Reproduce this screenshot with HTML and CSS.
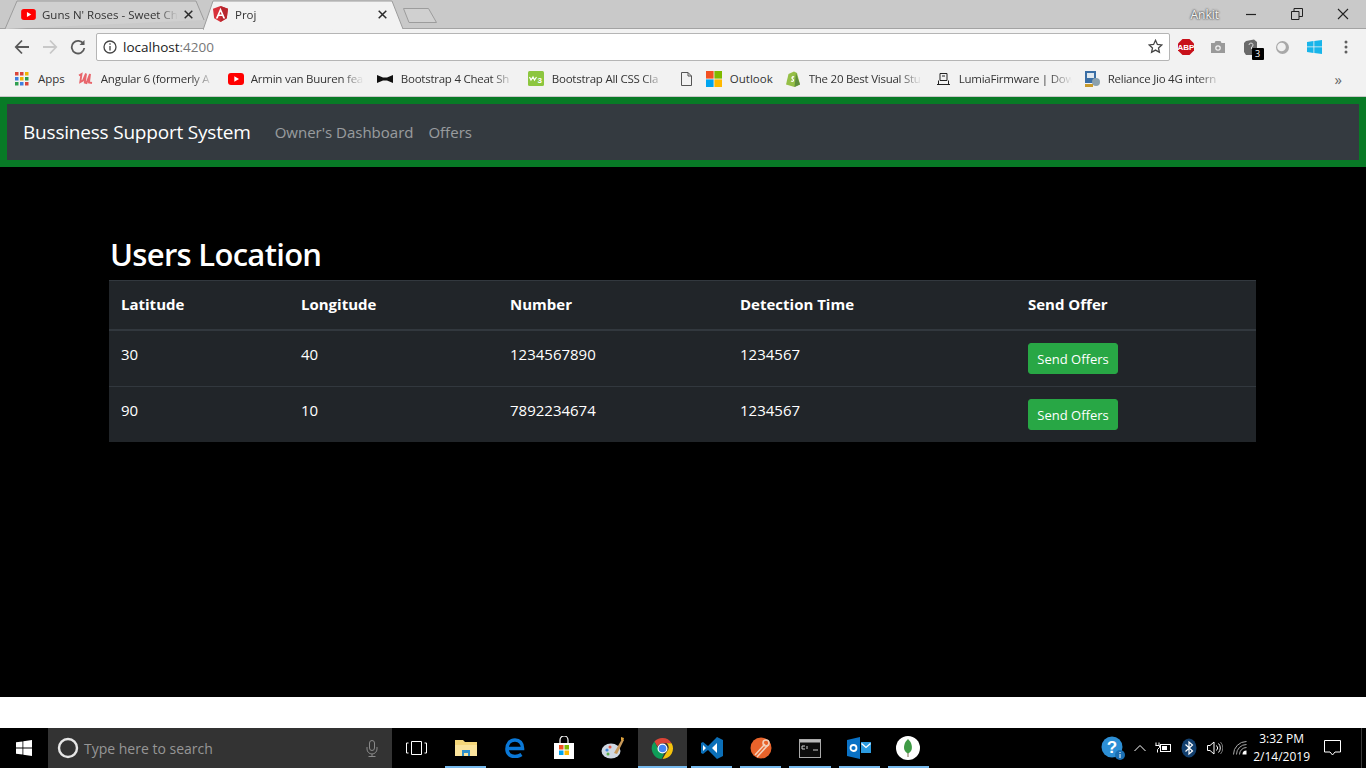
FILE: index.html
```html
<!DOCTYPE html>
<html lang="en">
<head>
    <meta charset="UTF-8">
    <meta name="viewport" content="width=device-width, initial-scale=1.0">
    <title>Proj</title>
    <link rel="stylesheet" href="styles.css">
</head>
<body>
    <svg class="defs" width="0" height="0">
        <symbol id="yt" viewBox="0 0 16 12"><rect width="16" height="12" rx="3" fill="#f00"/><path d="M6.3 3.3v5.4L11 6z" fill="#fff"/></symbol>
        <symbol id="tabx" viewBox="0 0 9 9"><path d="M.7.7l7.600 7.600M8.300.7L.7 8.300" fill="none" stroke="#2b2b2b" stroke-width="1.500"/></symbol>
    </svg>

    <!-- browser: tabs -->
    <div class="tabbar">
        <div class="tab">
            <svg class="tab-shape" width="205" height="29" viewBox="0 0 205 29"><path d="M5 29 L17 1 H196 L204 20" fill="#d0d0d0" stroke="#9c9c9c"/></svg>
            <svg class="fav" width="15" height="11"><use href="#yt"/></svg>
            <span class="tab-title">Guns N' Roses - Sweet Ch</span>
            <svg class="tab-x" width="9" height="9"><use href="#tabx"/></svg>
        </div>
        <div class="tab tab-active">
            <svg class="tab-shape" width="202" height="30" viewBox="0 0 202 30"><path d="M0 30 L10 1 H189 L200 29" fill="#f2f2f2" stroke="#9c9c9c"/></svg>
            <svg class="fav" width="15" height="16" viewBox="0 0 15 16"><path d="M7.500 0L0 2.700l1.200 9.600L7.500 16l6.300-3.700L15 2.700z" fill="#d8303a"/><path d="M7.500 0v16l6.300-3.700L15 2.700z" fill="#b8262e"/><path d="M7.500 1.800L2.800 12.500h1.900l1-2.400h3.600l1 2.400h1.900zm0 4l1.200 2.800H6.300z" fill="#fff"/></svg>
            <span class="tab-title">Proj</span>
            <svg class="tab-x" width="9" height="9"><use href="#tabx"/></svg>
        </div>
        <svg class="new-tab" width="36" height="17" viewBox="0 0 36 17"><path d="M1.500 1.500H26.500L34.500 15.500H7z" fill="#d0d0d0" stroke="#9c9c9c" stroke-linejoin="round"/></svg>
        <span class="user">Ankit</span>
        <div class="winbtns">
            <svg width="12" height="12" viewBox="0 0 12 12"><path d="M1 6.500h10" stroke="#222" stroke-width="1.200"/></svg>
            <svg width="12" height="12" viewBox="0 0 12 12" fill="none" stroke="#222"><path d="M.5 3.500h7.500v8H.5zM3 3.500V.5h8.500v8H8"/></svg>
            <svg width="12" height="12" viewBox="0 0 12 12" stroke="#222" stroke-width="1.100"><path d="M1 1l10 10M11 1L1 11"/></svg>
        </div>
    </div>

    <!-- browser: address bar -->
    <div class="toolbar">
        <svg class="nav-ic" width="16" height="16" viewBox="0 0 16 16" fill="none" stroke="#5a5a5a" stroke-width="1.800"><path d="M15 8H2M8 1.500L1.800 8 8 14.500"/></svg>
        <svg class="nav-ic" width="16" height="16" viewBox="0 0 16 16" fill="none" stroke="#c8c8c8" stroke-width="1.800"><path d="M1 8h13M8 1.500L14.200 8 8 14.500"/></svg>
        <svg class="nav-ic" width="16" height="16" viewBox="0 0 16 16" fill="none" stroke="#5a5a5a" stroke-width="1.800"><path d="M13.500 5A6.300 6.300 0 1 0 14.300 9"/><path d="M14.500 1v5h-5z" fill="#5a5a5a" stroke="none"/></svg>
        <div class="omnibox">
            <svg width="14" height="14" viewBox="0 0 14 14" fill="none" stroke="#444" stroke-width="1.300"><circle cx="7" cy="7" r="6"/><path d="M7 6v4.500M7 3.300v1.500"/></svg>
            <span class="url">localhost<span class="url-port">:4200</span></span>
            <svg class="star" width="15" height="15" viewBox="0 0 15 15" fill="none" stroke="#444" stroke-width="1.300"><path d="M7.500 1.300l1.900 4.100 4.400.5-3.300 3 .9 4.400-3.900-2.200-3.900 2.200.9-4.400-3.300-3 4.400-.5z"/></svg>
        </div>
        <div class="ext-icons">
            <svg width="18" height="18" viewBox="0 0 18 18"><path d="M5.500 1h7L17 5.500v7L12.500 17h-7L1 12.500v-7z" fill="#c8101a"/><text x="9" y="12" class="abp">ABP</text></svg>
            <svg width="16" height="14" viewBox="0 0 16 14"><path d="M1 3h3.500l1-2h5l1 2H15v10H1z" fill="#9a9a9a"/><circle cx="8" cy="8" r="2.800" fill="#f2f2f2"/><circle cx="8" cy="8" r="1.600" fill="#9a9a9a"/></svg>
            <div class="ext-badge-wrap">
                <svg width="15" height="16" viewBox="0 0 15 16"><path d="M3 2l8-1.500L14 3v10l-5 3H3L1 13V4z" fill="#6a6a6a"/><path d="M6 6a2 2 0 1 1 2.500 2V10" fill="none" stroke="#ddd"/></svg>
                <span class="ext-badge">3</span>
            </div>
            <svg width="15" height="15" viewBox="0 0 15 15"><circle cx="7.500" cy="7.500" r="6.500" fill="#a8a8a8"/><circle cx="6.500" cy="7" r="4.300" fill="#f1f1f1"/></svg>
            <svg width="15" height="14" viewBox="0 0 15 14" fill="#18b5ea"><path d="M0 2l6.500-1v5.500H0zM7.300.9L15 0v6.500H7.300zM0 7.300h6.500V13L0 12zM7.300 7.300H15V14l-7.700-1z"/></svg>
            <svg width="4" height="14" viewBox="0 0 4 14" fill="#5f5f5f"><circle cx="2" cy="2" r="1.500"/><circle cx="2" cy="7" r="1.500"/><circle cx="2" cy="12" r="1.500"/></svg>
        </div>
    </div>

    <!-- browser: bookmarks -->
    <div class="bookmarks">
        <a class="bm bm-apps">
            <svg width="14" height="14" viewBox="0 0 14 14"><g fill="#d9453a"><rect width="3.500" height="3.500"/><rect x="5" width="3.500" height="3.500"/></g><rect x="10" width="3.500" height="3.500" fill="#f0b400"/><g fill="#3f7fe0"><rect y="5" width="3.500" height="3.500"/></g><rect x="5" y="5" width="3.500" height="3.500" fill="#f0b400"/><rect x="10" y="5" width="3.500" height="3.500" fill="#2e9e4f"/><rect y="10" width="3.500" height="3.500" fill="#2e9e4f"/><rect x="5" y="10" width="3.500" height="3.500" fill="#3f7fe0"/><rect x="10" y="10" width="3.500" height="3.500" fill="#d9453a"/></svg>
            <span>Apps</span>
        </a>
        <a class="bm bm-wide">
            <svg width="15" height="13" viewBox="0 0 15 13" fill="none" stroke="#e8656b" stroke-width="1.900"><path d="M1 3.500l2.500-1.500-1.200 8 2.700-1.500L8 1.500 6.800 10.500l1.700.5 3.500-9-1 8.500 3 .5"/></svg>
            <span class="fade">Angular 6 (formerly A</span>
        </a>
        <a class="bm bm-yt">
            <svg width="16" height="12"><use href="#yt"/></svg>
            <span class="fade">Armin van Buuren fea</span>
        </a>
        <a class="bm bm-wide">
            <svg width="16" height="8" viewBox="0 0 16 8" fill="#111"><path d="M0 0l6 2.500h4L16 0v8l-6-2.500H6L0 8z"/></svg>
            <span class="fade">Bootstrap 4 Cheat Sh</span>
        </a>
        <a class="bm bm-w3">
            <svg width="16" height="15" viewBox="0 0 16 15"><rect width="16" height="15" rx="1.500" fill="#8cc63f"/><path d="M1.500 6l1.500 3 2-3 1.500 3 2-3" fill="none" stroke="#fff" stroke-width="1.200"/><text x="9.500" y="11.500" class="w3">3</text></svg>
            <span class="fade">Bootstrap All CSS Cla</span>
        </a>
        <a class="bm bm-doc">
            <svg width="11" height="14" viewBox="0 0 11 14" fill="none" stroke="#555"><path d="M.5.500h6.500l3.500 3.500v9.500H.5zM7 .5V4h3.500"/></svg>
        </a>
        <a class="bm bm-outlook">
            <svg width="16" height="16" viewBox="0 0 16 16"><rect width="7.600" height="7.600" fill="#f25022"/><rect x="8.400" width="7.600" height="7.600" fill="#7fba00"/><rect y="8.400" width="7.600" height="7.600" fill="#00a4ef"/><rect x="8.400" y="8.400" width="7.600" height="7.600" fill="#ffb900"/></svg>
            <span>Outlook</span>
        </a>
        <a class="bm bm-wide">
            <svg width="16" height="17" viewBox="0 0 16 17"><path d="M1 14.500L3.500 4 9 1.500 12 3l3 11.500L9.500 17z" fill="#95bf47"/><path d="M11 3l4 11.500L9.500 17z" fill="#5e8e3e"/><path d="M9.200 7c-2-.8-3 1-1.500 2 1.500 1 1 3-1.800 2" fill="none" stroke="#fff" stroke-width="1.300"/></svg>
            <span class="fade">The 20 Best Visual Stu</span>
        </a>
        <a class="bm bm-short">
            <svg width="15" height="14" viewBox="0 0 15 14" fill="none" stroke="#222"><path d="M4 1.500h7v7H4zM2.500 8.500v4h10v-4M1 12.500h13M6 4h3"/></svg>
            <span class="fade">LumiaFirmware | Dow</span>
        </a>
        <a class="bm">
            <svg width="17" height="16" viewBox="0 0 17 16"><rect x="1" width="11" height="12" fill="#3a6ea5"/><rect x="3" y="2" width="7" height="5" fill="#dfe8ef"/><circle cx="12" cy="11" r="4" fill="#8aa0ad"/><path d="M1 13h8v3H1z" fill="#c79a2c"/></svg>
            <span class="fade">Reliance Jio 4G intern</span>
        </a>
        <span class="bm-more">»</span>
    </div>

    <!-- the page -->
    <main class="page">
        <nav class="navbar">
            <a class="brand">Bussiness Support System</a>
            <a class="nav-link">Owner's Dashboard</a>
            <a class="nav-link">Offers</a>
        </nav>

        <div class="content">
            <h2>Users Location</h2>
            <table class="users">
                <thead>
                    <tr>
                        <th class="col-lat">Latitude</th>
                        <th class="col-lng">Longitude</th>
                        <th class="col-num">Number</th>
                        <th class="col-time">Detection Time</th>
                        <th>Send Offer</th>
                    </tr>
                </thead>
                <tbody>
                    <tr>
                        <td>30</td>
                        <td>40</td>
                        <td>1234567890</td>
                        <td>1234567</td>
                        <td class="cell-btn"><button class="btn-send">Send Offers</button></td>
                    </tr>
                    <tr>
                        <td>90</td>
                        <td>10</td>
                        <td>7892234674</td>
                        <td>1234567</td>
                        <td class="cell-btn"><button class="btn-send">Send Offers</button></td>
                    </tr>
                </tbody>
            </table>
        </div>
    </main>
    <div class="page-rest"></div>

    <!-- windows taskbar -->
    <footer class="taskbar">
        <div class="start">
            <svg width="16" height="16" viewBox="0 0 16 16" fill="#fff"><path d="M0 2.300l6.500-.9v6.200H0zM7.300 1.300L16 0v7.600H7.300zM0 8.400h6.500v6.200L0 13.700zM7.300 8.400H16V16l-8.700-1.300z"/></svg>
        </div>
        <div class="search">
            <svg width="22" height="22" viewBox="0 0 22 22" fill="none" stroke="#e6e6e6" stroke-width="2.400"><circle cx="11" cy="11" r="9"/></svg>
            <span class="search-text">Type here to search</span>
            <svg class="mic" width="12" height="17" viewBox="0 0 12 17" fill="none" stroke="#8a8a8a"><rect x="3.500" y=".5" width="5" height="10" rx="2.500"/><path d="M1 7v2a5 5 0 0 0 10 0V7M6 14v2.500M2.500 16.500h7"/></svg>
        </div>
        <div class="task-view">
            <svg width="21" height="14" viewBox="0 0 21 14" fill="none" stroke="#fff"><path d="M5.500.5h10v13h-10zM2.500 2H.5v10h2M18.500 2h2v10h-2"/></svg>
        </div>
        <div class="task on">
            <svg width="22" height="18" viewBox="0 0 22 18"><path d="M0 1h8l2 2h12v14H0z" fill="#f5d77a"/><path d="M0 6h22v11H0z" fill="#fbe49c"/><path d="M7 11h8v6H13v-3H9v3H7z" fill="#2f8fc9"/></svg>
        </div>
        <div class="task">
            <svg width="20" height="20" viewBox="0 0 20 20" fill="none" stroke="#0a78d7" stroke-width="3.600"><path d="M2.500 10.500h15C17.500 5 14.500 2 10 2 5 2 2 6 2 11c0 5 3.500 7.500 8 7.500 2.500 0 4.500-.7 6.500-2"/></svg>
        </div>
        <div class="task">
            <svg width="24" height="24" viewBox="0 0 24 24"><path d="M2 7h20v16H2z" fill="#fff"/><path d="M8 7V4a4 4 0 0 1 8 0v3" fill="none" stroke="#fff" stroke-width="1.200"/><rect x="7" y="9" width="4.500" height="4.500" fill="#f25022"/><rect x="12.500" y="9" width="4.500" height="4.500" fill="#7fba00"/><rect x="7" y="14.500" width="4.500" height="4.500" fill="#00a4ef"/><rect x="12.500" y="14.500" width="4.500" height="4.500" fill="#ffb900"/></svg>
        </div>
        <div class="task">
            <svg width="24" height="24" viewBox="0 0 24 24"><ellipse cx="10" cy="15" rx="9.500" ry="7.500" fill="#cfd8e3"/><circle cx="6" cy="14" r="1.600" fill="#3f86d8"/><circle cx="9" cy="11" r="1.500" fill="#e25a4a"/><circle cx="7" cy="18" r="1.500" fill="#5aae4e"/><path d="M13 17L21 3l2 1-7 14z" fill="#c8995a"/><path d="M20 1l3 1-1 3-2-1z" fill="#e0a33c"/></svg>
        </div>
        <div class="task on active">
            <svg width="23" height="23" viewBox="0 0 24 24"><path d="M12 1a11 11 0 0 1 9.500 5.500H12a5.500 5.500 0 0 0-5.200 3.800L3.500 4.800A11 11 0 0 1 12 1z" fill="#db4437"/><path d="M21.500 6.500A11 11 0 0 1 12 23l5-8.500a5.500 5.500 0 0 0-.6-8z" fill="#f4c20d"/><path d="M3.500 4.800L8 13a5.500 5.500 0 0 0 5.800 4.200L11 23A11 11 0 0 1 3.500 4.800z" fill="#0f9d58"/><circle cx="12" cy="12" r="4.600" fill="#4285f4" stroke="#fff" stroke-width="1.300"/></svg>
        </div>
        <div class="task on">
            <svg width="24" height="24" viewBox="0 0 24 24"><path d="M17 1l6 3v16l-6 3-9-9-5 4-2-1V7l2-1 5 4z" fill="#0b6fb8"/><path d="M17 7l-5 5 5 5zM3 9v6l3-3z" fill="#fff"/></svg>
        </div>
        <div class="task on">
            <svg width="24" height="24" viewBox="0 0 24 24"><circle cx="12" cy="12" r="10.500" fill="#e8632b"/><path d="M6 19L16 8M8 21l11-12" stroke="#f3d0bb" stroke-width="1.600"/><circle cx="17" cy="7" r="3" fill="none" stroke="#f3d0bb" stroke-width="1.600"/></svg>
        </div>
        <div class="task on">
            <svg width="22" height="19" viewBox="0 0 22 19"><rect x=".5" y=".5" width="21" height="18" fill="#0c0c0c" stroke="#aaa"/><rect x="1" y="1" width="20" height="2.500" fill="#bbb"/><path d="M3 7h3M3 7v3h3M8 7v3M14 11h5" stroke="#ccc" fill="none"/></svg>
        </div>
        <div class="task on">
            <svg width="24" height="22" viewBox="0 0 24 22"><path d="M0 3l13-3v22L0 19z" fill="#0a72c6"/><circle cx="6.500" cy="11" r="3" fill="none" stroke="#fff" stroke-width="1.800"/><rect x="14" y="5" width="10" height="11" fill="#2c9be0"/><path d="M14.500 6.500l4.500 4 4.500-4" fill="none" stroke="#fff" stroke-width="1.300"/></svg>
        </div>
        <div class="task on">
            <svg width="24" height="24" viewBox="0 0 24 24"><circle cx="12" cy="12" r="12" fill="#fff"/><path d="M12 3c4 3.500 4.500 8.500 3.500 11-.7 1.800-2.300 3-3.500 3.500C10.800 17 9.200 15.800 8.500 14 7.500 11.500 8 6.500 12 3z" fill="#3f9b45"/><path d="M12 17v4" stroke="#7a6a50"/></svg>
        </div>

        <div class="tray">
            <div class="tray-help">
                <svg width="24" height="24" viewBox="0 0 24 24"><circle cx="11" cy="11" r="10.500" fill="#2d8fd5"/><text x="11" y="17" class="help-q">?</text><circle cx="19" cy="19" r="5" fill="#1b6fb3"/><path d="M19 18v4M19 16v1" stroke="#fff"/></svg>
            </div>
            <svg class="tray-chev" width="12" height="8" viewBox="0 0 12 8" fill="none" stroke="#fff"><path d="M.5 7L6 1.500 11.500 7"/></svg>
            <svg width="16" height="12" viewBox="0 0 16 12" fill="none" stroke="#fff"><rect x="5.500" y="2.500" width="10" height="7"/><rect x="7" y="4" width="5" height="4" fill="#fff" stroke="none"/><path d="M1 .5v3M4 .5v3M.5 3.500h4v2l-2 2v3"/></svg>
            <svg class="tray-bt" width="16" height="20" viewBox="0 0 16 20"><ellipse cx="8" cy="10" rx="7.500" ry="9.500" fill="#123f6e"/><path d="M4.500 6.500l7 6.500L8 16V4l3.500 3-7 6.500" fill="none" stroke="#fff" stroke-width="1.200"/></svg>
            <svg width="16" height="14" viewBox="0 0 16 14" fill="none" stroke="#fff"><path d="M.5 4.500h2.500L7 1v12L3 9.500H.5zM9.500 4.500a3.500 3.500 0 0 1 0 5M11.500 2.500a6.500 6.500 0 0 1 0 9"/><path d="M13.500 1a9 9 0 0 1 0 12" stroke="#777"/></svg>
            <svg width="14" height="14" viewBox="0 0 14 14" fill="none" stroke="#aaa"><path d="M.5 13.500A13 13 0 0 1 13.500.5M3.500 13.500A10 10 0 0 1 13.500 3.500M6.500 13.500A7 7 0 0 1 13.500 6.500" /><path d="M9.500 13.500a4 4 0 0 1 4-4v4z" fill="#fff" stroke="none"/></svg>
            <div class="clock"><span>3:32 PM</span><span>2/14/2019</span></div>
            <svg class="notif" width="17" height="16" viewBox="0 0 17 16" fill="none" stroke="#fff"><path d="M.5.500h16v11.500H11l-2.500 3-2.500-3H.5z"/></svg>
        </div>
    </footer>
</body>
</html>
```

FILE: styles.css
```css
* {
    box-sizing: border-box;
}
body {
    margin: 0;
    height: 768px;
    overflow: hidden;
    display: flex;
    flex-direction: column;
    font-family: "Open Sans", "Noto Sans", sans-serif;
    background: #fff;
}
.defs {
    display: block;
    height: 0;
}
svg {
    flex: none;
    display: block;
}

/* tabs */
.tabbar {
    height: 29px;
    flex: none;
    display: flex;
    align-items: center;
    background: #c9c9c9;
    border-bottom: 1px solid #a3a3a3;
    padding-left: 5px;
}
.tab {
    position: relative;
    width: 198px;
    height: 29px;
    display: flex;
    align-items: center;
    padding: 0 10px 0 16px;
    font-size: 11.5px;
    color: #333;
}
.tab-active {
    width: 199px;
    padding-right: 15px;
}
.tab-shape {
    position: absolute;
    top: 0;
    left: -5px;
}
.tab-active .tab-shape {
    left: 0;
}
.tab .fav {
    position: relative;
    margin-right: 6px;
}
.tab-active .fav {
    margin-left: -6px;
    margin-right: 7px;
}
.tab-title {
    position: relative;
    flex: 1;
    white-space: nowrap;
    overflow: hidden;
    -webkit-mask-image: linear-gradient(to right, #000 85%, transparent);
    mask-image: linear-gradient(to right, #000 85%, transparent);
}
.tab-x {
    position: relative;
    margin-left: 6px;
}
.new-tab {
    margin: 3px 0 0 0;
}
.user {
    margin-left: auto;
    margin-right: 26px;
    font-size: 12px;
    color: #f4f4f4;
    text-shadow: 0 0 2px #444, 0 0 2px #444;
}
.winbtns {
    display: flex;
    gap: 34px;
    margin-right: 17px;
}

/* address bar */
.toolbar {
    height: 36px;
    flex: none;
    display: flex;
    align-items: center;
    background: #f2f2f2;
    padding-left: 14px;
}
.nav-ic {
    margin-right: 12px;
}
.omnibox {
    flex: none;
    width: 1074px;
    height: 28px;
    margin-left: -2px;
    display: flex;
    align-items: center;
    gap: 6px;
    padding: 0 6px 0 6px;
    background: #fff;
    border: 1px solid #b5b5b5;
    border-radius: 2px;
    margin-top: -1px;
}
.url {
    font-size: 13.5px;
    color: #222;
}
.url-port {
    color: #777;
}
.star {
    margin-left: auto;
}
.ext-icons {
    display: grid;
    grid-template-columns: repeat(6, 32px);
    justify-items: center;
    align-items: center;
}
.abp {
    font: bold 8px "Liberation Sans", sans-serif;
    fill: #fff;
    text-anchor: middle;
}
.w3 {
    font: bold 8px "Liberation Sans", sans-serif;
    fill: #fff;
}
.ext-badge-wrap {
    position: relative;
}
.ext-badge {
    position: absolute;
    left: 9px;
    top: 9px;
    width: 12px;
    height: 12px;
    background: #000;
    color: #fff;
    font-size: 9px;
    line-height: 12px;
    text-align: center;
    border-radius: 1px;
}

/* bookmarks */
.bookmarks {
    height: 32px;
    flex: none;
    display: flex;
    align-items: center;
    background: #f2f2f2;
    padding: 0 0 4px 15px;
    border-bottom: 1px solid #c8c8c8;
    font-size: 11.5px;
    color: #333;
}
.bm {
    display: flex;
    align-items: center;
    gap: 7px;
    margin-right: 14px;
    white-space: nowrap;
}
.bm-apps {
    gap: 9px;
    margin-right: 13px;
}
.bm-wide {
    gap: 8px;
}
.bm-yt {
    margin-right: 13px;
}
.bm-w3 {
    gap: 8px;
    margin-right: 13px;
}
.bm-doc {
    margin: 0 14px 0 3px;
}
.bm-outlook {
    margin-right: 12px;
    gap: 8px;
}
.bm-short {
    margin: 0 12px 0 0;
    gap: 8px;
}
.fade {
    width: 113px;
    overflow: hidden;
    letter-spacing: -.25px;
    -webkit-mask-image: linear-gradient(to right, #000 80%, transparent);
    mask-image: linear-gradient(to right, #000 80%, transparent);
}
.bm-more {
    margin-left: auto;
    margin-right: 24px;
    font-size: 15px;
    color: #666;
}

/* page */
.page {
    height: 600px;
    flex: none;
    background: #000;
    color: #fff;
}
.navbar {
    height: 70px;
    display: flex;
    align-items: center;
    background: #343a40;
    border: 7px solid #087a26;
    padding: 0 16px;
}
.brand {
    font-size: 19px;
    letter-spacing: -.2px;
    color: #fff;
    margin-right: 24px;
}
.nav-link {
    font-size: 15px;
    color: rgba(255, 255, 255, .5);
    margin-right: 15px;
    margin-top: -1px;
}
.content {
    padding: 68px 110px 0 109px;
}
h2 {
    margin: 0 0 7px 1px;
    font-size: 31px;
    font-weight: 600;
    letter-spacing: -.7px;
    line-height: 38px;
}
.users {
    width: 100%;
    border-collapse: collapse;
    background: #212529;
    font-size: 15px;
    table-layout: fixed;
}
.users th,
.users td {
    padding: 11px 12px 13px;
    text-align: left;
    vertical-align: top;
    line-height: 24px;
    border-top: 1px solid #32383e;
}
.users th {
    font-weight: 700;
    border-bottom: 2px solid #32383e;
}
.users .cell-btn {
    padding: 12px;
}
.col-lat {
    width: 180px;
}
.col-lng {
    width: 209px;
}
.col-num {
    width: 230px;
}
.col-time {
    width: 288px;
}
.btn-send {
    display: block;
    width: 90px;
    height: 31px;
    padding: 0;
    border: 1px solid #28a745;
    border-radius: 3px;
    background: #28a745;
    color: #fff;
    font-family: inherit;
    font-size: 13px;
}
.page-rest {
    height: 31px;
    flex: none;
    background: #fff;
}

/* taskbar */
.taskbar {
    height: 40px;
    flex: none;
    display: flex;
    align-items: center;
    background: #000;
    color: #fff;
}
.start {
    width: 48px;
    height: 40px;
    display: flex;
    align-items: center;
    justify-content: center;
}
.search {
    width: 344px;
    height: 40px;
    display: flex;
    align-items: center;
    padding: 0 14px 0 9px;
    gap: 5px;
    background: #333;
}
.search-text {
    font-size: 14px;
    color: #969696;
}
.mic {
    margin-left: auto;
}
.task-view {
    width: 49px;
    height: 40px;
    display: flex;
    align-items: center;
    justify-content: center;
}
.task {
    width: 49.2px;
    height: 40px;
    display: flex;
    align-items: center;
    justify-content: center;
    position: relative;
}
.task.on::after {
    content: "";
    position: absolute;
    left: 4px;
    right: 4px;
    bottom: 0;
    height: 2px;
    background: #76b9ed;
}
.task.active {
    background: #333;
}
.task.active::after {
    left: 0;
    right: 0;
}
.tray {
    margin-left: auto;
    margin-right: 4px;
    height: 40px;
    display: flex;
    align-items: center;
    gap: 10px;
    padding-right: 20px;
    border-right: 1px solid #3a3a3a;
}
.tray-help {
    margin-right: -1px;
}
.tray-chev {
    margin-right: -1px;
}
.help-q {
    font: bold 17px "Liberation Sans", sans-serif;
    fill: #fff;
    text-anchor: middle;
}
.clock {
    display: flex;
    flex-direction: column;
    align-items: center;
    font-size: 12px;
    line-height: 18px;
    margin-left: -4px;
    margin-right: 4px;
}
```
